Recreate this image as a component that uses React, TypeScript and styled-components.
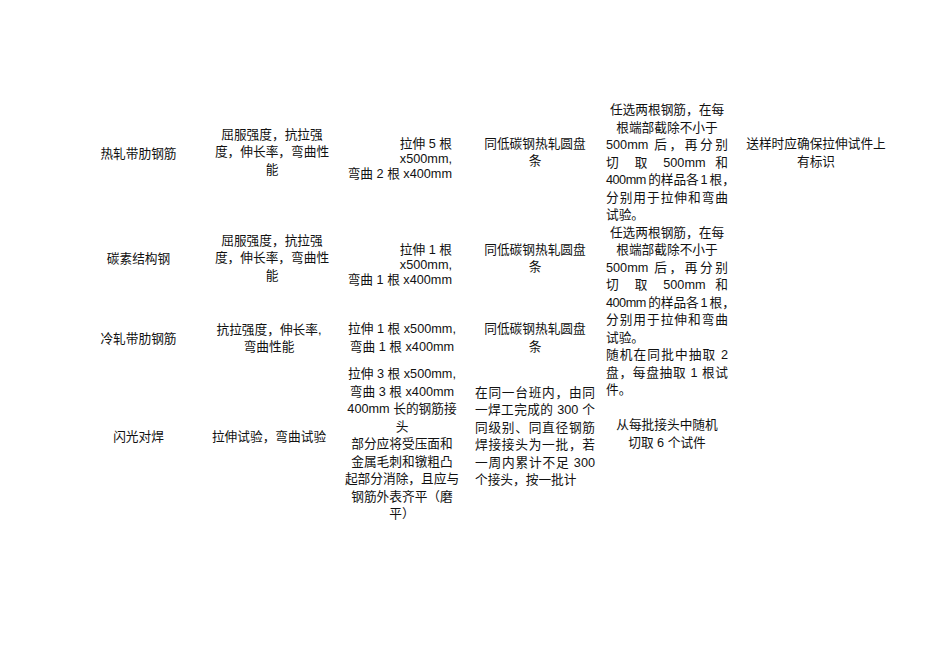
import React from 'react';
import styled, { createGlobalStyle } from 'styled-components';

type Align = 'left' | 'center' | 'right' | 'justify' | 'tight';

const Global = createGlobalStyle`
  html, body { margin: 0; padding: 0; background: #ffffff; }
  body {
    font-family: "Liberation Sans", "Noto Sans CJK SC", sans-serif;
    color: #111111;
  }
`;

const Page = styled.div`
  width: 950px;
  height: 672px;
  box-sizing: border-box;
  padding: 102px 0 0 73px;
  overflow: hidden;
  font-size: 12.7px;
  background: #ffffff;
`;

const Table = styled.div`
  display: grid;
  grid-template-columns: 131px 130px 136px 130px 134px 164px;
  grid-template-rows: 106px 104px 56px 140px;
`;

const Cell = styled.div<{
  $col: number;
  $row: string;
  $padL?: number;
  $padR?: number;
  $shift?: number;
  $lh?: number;
  $top?: boolean;
}>`
  grid-column: ${(p) => p.$col};
  grid-row: ${(p) => p.$row};
  align-self: ${(p) => (p.$top ? 'start' : 'center')};
  min-width: 0;
  padding-left: ${(p) => p.$padL ?? 0}px;
  padding-right: ${(p) => p.$padR ?? 0}px;
  padding-top: ${(p) => (p.$shift && p.$shift > 0 ? p.$shift * 2 : 0)}px;
  padding-bottom: ${(p) => (p.$shift && p.$shift < 0 ? -p.$shift * 2 : 0)}px;
  line-height: ${(p) => p.$lh ?? 17.5}px;
`;

const Line = styled.div<{ $align: Align }>`
  text-align: ${(p) => (p.$align === 'justify' || p.$align === 'tight' ? 'justify' : p.$align)};
  ${(p) =>
    p.$align === 'justify' || p.$align === 'tight'
      ? 'text-align-last: justify; text-justify: inter-character;'
      : 'white-space: nowrap;'}
  ${(p) =>
    p.$align === 'tight'
      ? 'letter-spacing: -0.5px; font-feature-settings: "halt";'
      : ''}
`;

type L = string | [string, Align];

interface CellData {
  col: number;
  row: string;
  lines: L[];
  align?: Align;
  shift?: number;
  lh?: number;
  padL?: number;
  padR?: number;
  top?: boolean;
}

const rule1: L[] = [
  '任选两根钢筋，在每',
  '根端部截除不小于',
  ['500mm 后，再分别', 'justify'],
  ['切 取 500mm 和', 'justify'],
  ['400mm\u2009的样品各\u20091\u2009根，', 'tight'],
  ['分别用于拉伸和弯曲', 'justify'],
  ['试验。', 'left'],
];

const cells: CellData[] = [
  // row 1
  { col: 1, row: '1', lines: ['热轧带肋钢筋'] },
  { col: 2, row: '1', lines: ['屈服强度，抗拉强', '度，伸长率，弯曲性', '能'], padL: 6, shift: -2 },
  {
    col: 3,
    row: '1',
    lines: ['拉伸 5 根', 'x500mm,', '弯曲 2 根 x400mm'],
    align: 'right',
    padR: 18,
    lh: 15,
    shift: 4.5,
  },
  { col: 4, row: '1', lines: ['同低碳钢热轧圆盘', '条'], shift: -2 },
  { col: 6, row: '1', lines: ['送样时应确保拉伸试件上', '有标识'], shift: -1.5 },
  // row 2
  { col: 1, row: '2', lines: ['碳素结构钢'] },
  { col: 2, row: '2', lines: ['屈服强度，抗拉强', '度，伸长率，弯曲性', '能'], padL: 6, shift: -1 },
  {
    col: 3,
    row: '2',
    lines: ['拉伸 1 根', 'x500mm,', '弯曲 1 根 x400mm'],
    align: 'right',
    padR: 18,
    lh: 15,
    shift: 5,
  },
  { col: 4, row: '2', lines: ['同低碳钢热轧圆盘', '条'], shift: -1 },
  // row 3
  { col: 1, row: '3', lines: ['冷轧带肋钢筋'] },
  { col: 2, row: '3', lines: ['抗拉强度，伸长率,', '弯曲性能'], shift: -1 },
  { col: 3, row: '3', lines: ['拉伸 1 根 x500mm,', '弯曲 1 根 x400mm'], shift: -1.5 },
  { col: 4, row: '3', lines: ['同低碳钢热轧圆盘', '条'], shift: -1.5 },
  // row 4
  { col: 1, row: '4', lines: ['闪光对焊'] },
  { col: 2, row: '4', lines: ['拉伸试验，弯曲试验'] },
  {
    col: 3,
    row: '4',
    lines: [
      '拉伸 3 根 x500mm,',
      '弯曲 3 根 x400mm',
      '400mm 长的钢筋接',
      '头',
      '部分应将受压面和',
      '金属毛刺和镦粗凸',
      '起部分消除，且应与',
      '钢筋外表齐平（磨',
      '平）',
    ],
    shift: 7,
  },
  {
    col: 4,
    row: '4',
    lines: [
      ['在同一台班内，由同', 'justify'],
      ['一焊工完成的 300 个', 'justify'],
      ['同级别、同直径钢筋', 'justify'],
      ['焊接接头为一批，若', 'justify'],
      ['一周内累计不足 300', 'justify'],
      ['个接头，按一批计', 'left'],
    ],
    padL: 5,
    padR: 5,
    shift: -1,
  },
  // column 5 flows through all rows
  {
    col: 5,
    row: '1 / 5',
    top: true,
    padL: 6,
    padR: 6,
    lines: [
      ...rule1,
      ...rule1,
      ['随机在同批中抽取 2', 'justify'],
      ['盘，每盘抽取 1 根试', 'justify'],
      ['件。', 'left'],
      '\u00a0',
      '从每批接头中随机',
      '切取 6 个试件',
    ],
  },
];

export default function App() {
  return (
    <>
      <Global />
      <Page>
        <Table>
          {cells.map((c, i) => (
            <Cell
              key={i}
              $col={c.col}
              $row={c.row}
              $padL={c.padL}
              $padR={c.padR}
              $shift={c.shift}
              $lh={c.lh}
              $top={c.top}
            >
              {c.lines.map((l, j) => {
                const [text, a] = typeof l === 'string' ? [l, c.align ?? 'center'] : l;
                return (
                  <Line key={j} $align={a as Align}>
                    {text}
                  </Line>
                );
              })}
            </Cell>
          ))}
        </Table>
      </Page>
    </>
  );
}
